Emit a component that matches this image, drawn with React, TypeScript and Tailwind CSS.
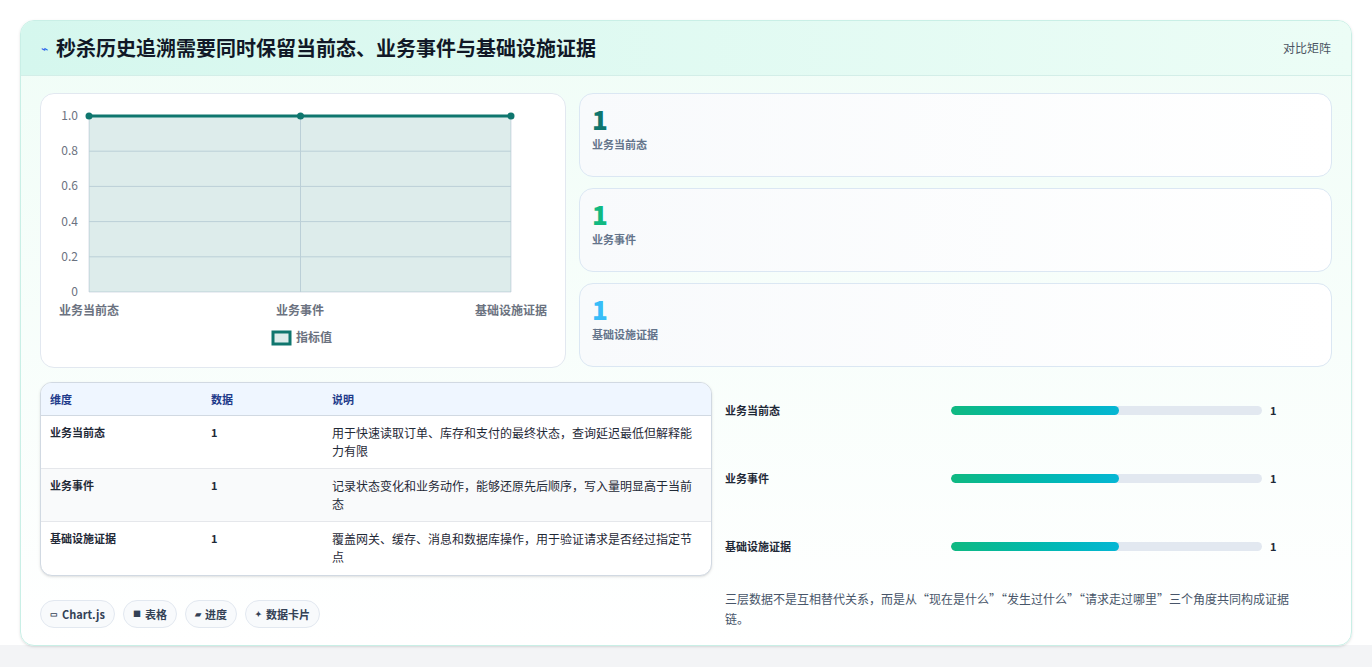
import React from "react";

const F = { fontFamily: '"Noto Sans CJK SC","Noto Sans",sans-serif' };

function Chart() {
  const x0 = 88, x1 = 510, y0 = 115, y1 = 291;
  const ys = [1, 0.8, 0.6, 0.4, 0.2, 0];
  const xs = [x0, (x0 + x1) / 2 + 0.5, x1];
  return (
    <svg width="524" height="273" viewBox="40 93 524 273" className="block">
      {ys.map((v, i) => {
        const y = y0 + ((y1 - y0) * i) / 5;
        return (
          <g key={i}>
            <line x1={x0} x2={x1} y1={y} y2={y} stroke="#d8dee8" strokeWidth="1" />
            <text x={77} y={y + 4} textAnchor="end" fontSize="12" fill="#6b7280" style={F}>{v === 1 ? "1.0" : v === 0 ? "0" : v.toFixed(1)}</text>
          </g>
        );
      })}
      {xs.map((x, i) => <line key={i} x1={x} x2={x} y1={y0} y2={y1} stroke="#d8dee8" />)}
      <rect x={x0} y={y0} width={x1 - x0} height={y1 - y0} fill="#0f766e" fillOpacity="0.14" />
      <line x1={x0} x2={x1} y1={y0} y2={y0} stroke="#0f766e" strokeWidth="3" />
      {xs.map((x, i) => <circle key={i} cx={x} cy={y0} r="3.5" fill="#0f766e" />)}
      <text x={88} y={314} textAnchor="middle" fontSize="12" fontWeight="600" fill="#6b7280" style={F}>业务当前态</text>
      <text x={299} y={314} textAnchor="middle" fontSize="12" fontWeight="600" fill="#6b7280" style={F}>业务事件</text>
      <text x={510} y={314} textAnchor="middle" fontSize="12" fontWeight="600" fill="#6b7280" style={F}>基础设施证据</text>
      <rect x={272} y={331} width={17} height={12} fill="#0f766e" fillOpacity="0.14" stroke="#0f766e" strokeWidth="3" />
      <text x={295} y={341} fontSize="12" fontWeight="600" fill="#6b7280" style={F}>指标值</text>
    </svg>
  );
}

const rows = [
  ["业务当前态", "1", "用于快速读取订单、库存和支付的最终状态，查询延迟最低但解释能力有限"],
  ["业务事件", "1", "记录状态变化和业务动作，能够还原先后顺序，写入量明显高于当前态"],
  ["基础设施证据", "1", "覆盖网关、缓存、消息和数据库操作，用于验证请求是否经过指定节点"],
];

export default function App() {
  return (
    <div className="w-[1372px] h-[667px] bg-[#f3f4f6] overflow-hidden" style={F}>
      <div className="h-[645px] bg-white pt-[20px] px-[20px]">
        <div className="h-[626px] rounded-[14px] border border-[#c9efe6] bg-gradient-to-b from-[#f0fdf7] to-white overflow-hidden shadow-sm">
          <div className="h-[55px] flex items-center justify-between px-[20px] bg-gradient-to-r from-[#d5f7ee] to-[#ecfdf6] border-b border-[#d3eee8]">
            <div className="flex items-center gap-[8px]">
              <span className="text-[#2563eb] text-[12px]">⌁</span>
              <span className="text-[20px] font-bold text-[#111827]">秒杀历史追溯需要同时保留当前态、业务事件与基础设施证据</span>
            </div>
            <span className="text-[12px] text-[#4b5563]">对比矩阵</span>
          </div>
          <div className="px-[19px] pt-[17px]">
            <div className="flex gap-[13px]">
              <div className="w-[526px] h-[275px] rounded-[14px] border border-[#e2e8f0] bg-white overflow-hidden"><Chart /></div>
              <div className="flex-1 flex flex-col gap-[11px]">
                {[["业务当前态", "#0f766e"], ["业务事件", "#10b981"], ["基础设施证据", "#38bdf8"]].map(([l, c]) => (
                  <div key={l} className="h-[84px] rounded-[14px] border border-[#dbe7f3] bg-gradient-to-r from-[#f8fafc] to-white px-[12px] pt-[8px]">
                    <div className="text-[26px] font-extrabold leading-[34px]" style={{ color: c }}>1</div>
                    <div className="text-[11px] font-semibold text-[#64748b] mt-[0px]">{l}</div>
                  </div>
                ))}
              </div>
            </div>
            <div className="flex gap-[13px] mt-[14px]">
              <div className="w-[672px]">
                <div className="rounded-[12px] border border-[#d1d9e2] overflow-hidden bg-white shadow-sm">
                  <div className="flex h-[33px] items-center bg-[#eff6ff] border-b border-[#d1d9e2] text-[11px] font-semibold text-[#1e3a8a]">
                    <div className="w-[170px] pl-[9px]">维度</div>
                    <div className="w-[121px]">数据</div>
                    <div className="flex-1">说明</div>
                  </div>
                  {rows.map((r, i) => (
                    <div key={i} className={`flex h-[53px] pt-[8px] text-[11px] text-[#1f2937] ${i < 2 ? "border-b border-[#e5e7eb]" : ""} ${i === 1 ? "bg-[#f9fafb]" : ""}`}>
                      <div className="w-[170px] pl-[9px] font-semibold">{r[0]}</div>
                      <div className="w-[121px] font-semibold">{r[1]}</div>
                      <div className="w-[364px] text-[12px] leading-[18px]">{r[2]}</div>
                    </div>
                  ))}
                </div>
                <div className="flex gap-[8px] mt-[24px]">
                  {[["▭", "Chart.js"], ["■", "表格"], ["▰", "进度"], ["✦", "数据卡片"]].map(([ic, t]) => (
                    <div key={t} className="h-[28px] px-[9px] rounded-full border border-[#e2e8f0] bg-[#f8fafc] flex items-center gap-[4px] text-[11px] font-semibold text-[#334155]">
                      <span className="text-[8px]">{ic}</span>{t}
                    </div>
                  ))}
                </div>
              </div>
              <div className="flex-1 pt-[21px]">
                {rows.map((r, i) => (
                  <div key={r[0]} className={`flex items-center h-[67px] ${i === 0 ? "h-[14px]" : ""} ${i === 1 ? "pt-[0px]" : ""}`} style={i === 0 ? { height: 14 } : { height: 68, paddingTop: 54 }}>
                    <div className="w-[226px] text-[11px] font-semibold text-[#1f2937]">{r[0]}</div>
                    <div className="w-[311px] h-[9px] rounded-full bg-[#e2e8f0] overflow-hidden">
                      <div className="h-full rounded-full bg-gradient-to-r from-[#10b981] to-[#06b6d4]" style={{ width: "54%" }} />
                    </div>
                    <div className="ml-[8px] text-[11px] font-bold text-[#1f2937]">1</div>
                  </div>
                ))}
                <div className="mt-[36px] text-[12px] leading-[20px] text-[#475569] pr-[20px]">三层数据不是互相替代关系，而是从“现在是什么”“发生过什么”“请求走过哪里”三个角度共同构成证据链。</div>
              </div>
            </div>
          </div>
        </div>
      </div>
    </div>
  );
}
